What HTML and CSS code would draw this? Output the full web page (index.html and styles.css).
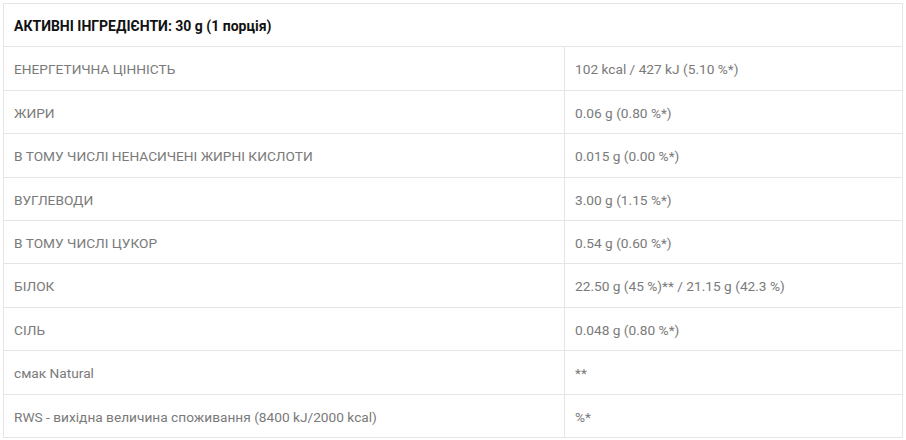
FILE: index.html
```html
<!DOCTYPE html>
<html lang="uk">
<head>
<meta charset="utf-8">
<title>Активні інгредієнти</title>
<link rel="stylesheet" href="styles.css">
</head>
<body>
<table class="nutri">
  <colgroup>
    <col class="col-name">
    <col class="col-val">
  </colgroup>
  <thead>
    <tr><th colspan="2" class="head">АКТИВНІ ІНГРЕДІЄНТИ: 30 g (1 порція)</th></tr>
  </thead>
  <tbody>
    <tr><td class="name">ЕНЕРГЕТИЧНА ЦІННІСТЬ</td><td class="val">102 kcal / 427 kJ (5.10 %*)</td></tr>
    <tr><td class="name">ЖИРИ</td><td class="val">0.06 g (0.80 %*)</td></tr>
    <tr><td class="name">В ТОМУ ЧИСЛІ НЕНАСИЧЕНІ ЖИРНІ КИСЛОТИ</td><td class="val">0.015 g (0.00 %*)</td></tr>
    <tr><td class="name">ВУГЛЕВОДИ</td><td class="val">3.00 g (1.15 %*)</td></tr>
    <tr><td class="name">В ТОМУ ЧИСЛІ ЦУКОР</td><td class="val">0.54 g (0.60 %*)</td></tr>
    <tr><td class="name">БІЛОК</td><td class="val">22.50 g (45 %)** / 21.15 g (42.3 %)</td></tr>
    <tr><td class="name">СІЛЬ</td><td class="val">0.048 g (0.80 %*)</td></tr>
    <tr><td class="name">смак Natural</td><td class="val">**</td></tr>
    <tr><td class="name">RWS - вихідна величина споживання (8400 kJ/2000 kcal)</td><td class="val">%*</td></tr>
  </tbody>
</table>
</body>
</html>
```
FILE: styles.css
```css
html, body {
  margin: 0;
  padding: 0;
  background: #fff;
}
body {
  padding: 3px;
  font-family: Roboto, "Liberation Sans", Arial, sans-serif;
  font-size: 14px;
}
.nutri {
  width: 900px;
  border-collapse: collapse;
  table-layout: fixed;
}
.col-name {
  width: 561px;
}
.nutri th,
.nutri td {
  border: 1px solid #e5e5e5;
  text-align: left;
  vertical-align: middle;
  padding: 12px 10px 10px;
  line-height: 20.4px;
}
.head {
  font-weight: 700;
  color: #111;
  line-height: 22px;
}
.name,
.val {
  color: #7a7a7a;
  font-size: 13.7px;
}
```
